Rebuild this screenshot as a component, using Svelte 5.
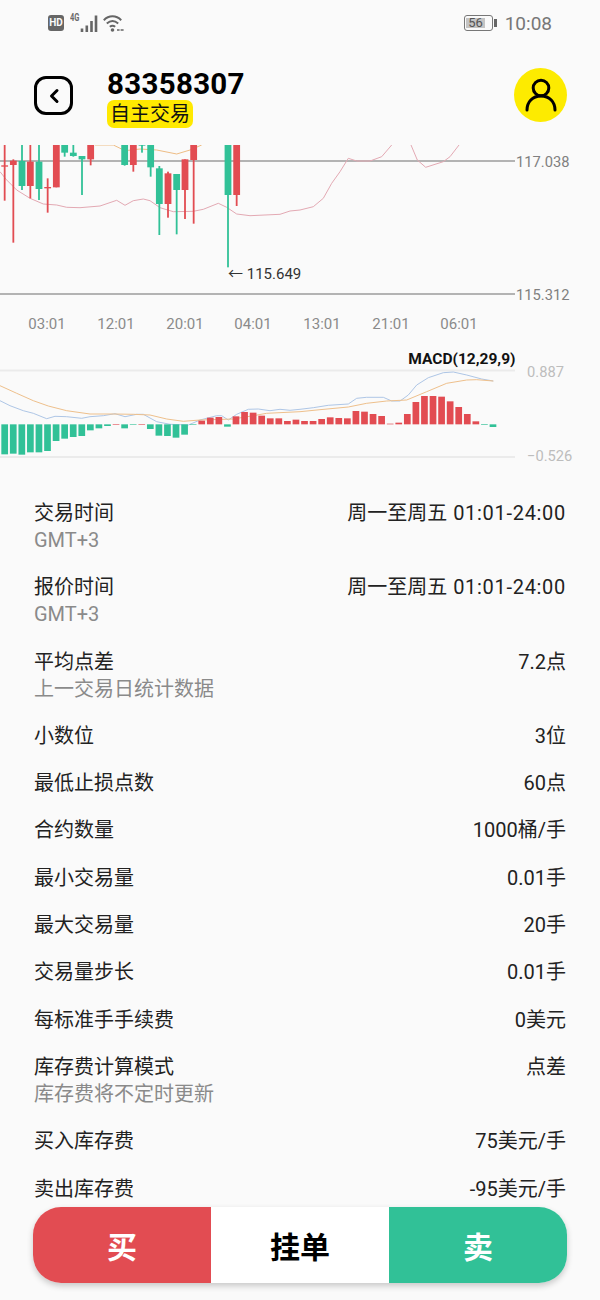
<script lang="ts">
  const RED = '#e24c52';
  const GREEN = '#31c197';

  // k-line, sampled at 3x: [center, wick top, wick bottom, body top, body bottom, up]
  const candles: [number, number, number, number, number, boolean][] = [
    [14, 45, 212, 106, 110, true],
    [40, 88, 338, 92, 105, true],
    [66, 45, 180, 93, 168, false],
    [91, 45, 205, 95, 168, true],
    [117, 45, 210, 95, 177, false],
    [143, 145, 248, 171, 175, true],
    [169, 45, 172, 45, 172, true],
    [194, 45, 80, 45, 68, false],
    [220, 45, 80, 68, 78, false],
    [246, 78, 195, 78, 88, false],
    [272, 45, 106, 45, 88, true],
    [374, 45, 107, 45, 105, false],
    [400, 45, 125, 45, 105, true],
    [426, 45, 68, 45, 47, false],
    [452, 45, 140, 45, 112, false],
    [478, 108, 315, 115, 222, false],
    [504, 125, 263, 130, 222, true],
    [530, 132, 313, 132, 180, false],
    [555, 88, 267, 88, 180, true],
    [581, 45, 281, 45, 90, true],
    [684, 45, 412, 45, 195, false],
    [710, 45, 228, 45, 195, true]
  ];

  const maLines = [
    [[0, 125], [20, 150], [50, 180], [90, 205], [130, 222], [170, 225], [200, 232], [240, 233], [300, 228], [350, 211], [375, 226], [400, 212], [430, 207], [450, 212], [480, 233], [520, 245], [580, 244], [610, 238], [655, 220], [680, 232], [710, 252], [750, 257], [840, 253], [870, 243], [900, 240], [940, 230], [970, 205], [995, 160], [1020, 125], [1045, 85], [1070, 93], [1110, 93], [1145, 80], [1175, 45]],
    [[1233, 45], [1252, 90], [1277, 112], [1330, 95], [1350, 80], [1377, 45]]
  ];
  const orangeLine = [[285, 45], [340, 45], [375, 62], [420, 57], [470, 60], [530, 72], [570, 60], [605, 45]];

  const times = [
    [47, '03:01'], [116, '12:01'], [185, '20:01'], [253, '04:01'],
    [322, '13:01'], [391, '21:01'], [459, '06:01']
  ];

  // macd histogram: edge of each bar at 3x, the zero line is 238
  const macd = [
    328, 326, 329, 322, 322, 318, 288, 281, 276, 273, 256, 250, 243, 238, 250, 239, 238, 252, 272, 273, 278, 269, 239,
    227, 218, 216, 245, 214, 201, 203, 212, 220, 220, 228, 224, 228, 228, 222, 217, 219, 220, 198, 200, 207, 213,
    236, 233, 207, 171, 153, 153, 155, 169, 186, 207, 229, 240, 246
  ];
  const macdBlue = [[0, 167], [30, 182], [70, 197], [100, 205], [140, 221], [165, 214], [200, 215], [245, 220], [270, 215], [310, 212], [345, 206], [375, 215], [410, 208], [430, 208], [470, 230], [510, 238], [565, 240], [600, 225], [650, 212], [665, 212], [685, 225], [710, 208], [745, 193], [775, 192], [810, 197], [840, 193], [870, 196], [900, 193], [940, 188], [985, 181], [1045, 177], [1070, 160], [1100, 157], [1150, 157], [1175, 168], [1200, 168], [1225, 150], [1250, 120], [1285, 98], [1330, 83], [1360, 81], [1400, 90], [1445, 102], [1480, 108]];
  const macdOrange = [[0, 122], [50, 145], [100, 167], [145, 183], [200, 197], [270, 207], [340, 207], [400, 208], [450, 210], [500, 222], [550, 229], [600, 225], [700, 222], [760, 212], [800, 205], [900, 200], [960, 194], [1045, 186], [1100, 175], [1160, 168], [1220, 165], [1280, 140], [1340, 115], [1400, 105], [1430, 104], [1480, 108]];

  const klineY = (y: number) => 130 + y / 3;
  const macdY = (y: number) => 345 + y / 3;
  const poly = (points: number[][], toY: (y: number) => number) =>
    points.map(([x, y]) => `${(x / 3).toFixed(1)},${toY(y).toFixed(1)}`).join(' ');

  const rows = [
    { label: '交易时间', value: '周一至周五', range: '01:01-24:00', note: 'GMT+3' },
    { label: '报价时间', value: '周一至周五', range: '01:01-24:00', note: 'GMT+3' },
    { label: '平均点差', value: '7.2点', note: '上一交易日统计数据' },
    { label: '小数位', value: '3位' },
    { label: '最低止损点数', value: '60点' },
    { label: '合约数量', value: '1000桶/手' },
    { label: '最小交易量', value: '0.01手' },
    { label: '最大交易量', value: '20手' },
    { label: '交易量步长', value: '0.01手' },
    { label: '每标准手手续费', value: '0美元' },
    { label: '库存费计算模式', value: '点差', note: '库存费将不定时更新' },
    { label: '买入库存费', value: '75美元/手' },
    { label: '卖出库存费', value: '-95美元/手' }
  ];
</script>

<div class="page">
  <div class="status">
    <div class="status-left">
      <span class="hd">HD</span>
      <span class="net">4G</span>
      <svg class="signal" width="18" height="17" viewBox="0 0 18 17">
        <path d="M2 13.500V17M6.800 10.500V17M11.500 6V17M16 0.500V17" stroke="#666" stroke-width="2.600" fill="none" />
      </svg>
      <svg class="wifi" width="21" height="17" viewBox="0 0 21 17" fill="none" stroke="#666" stroke-width="2">
        <path d="M0.800 5.200C5.800 0 13.200 0 18.200 5.200" />
        <path d="M3.800 8.600C7.300 5.500 11.700 5.500 15.200 8.600" />
        <path d="M6.800 11.800C8.500 10.500 10.500 10.500 12.200 11.800" />
        <circle cx="9.500" cy="15" r="1.800" fill="#666" stroke="none" />
        <path d="M14 15h2.600M17.600 15h3" stroke-width="1.500" />
      </svg>
    </div>
    <div class="status-right">
      <div class="battery"><span class="level">56</span></div>
      <span class="cap"></span>
      <span class="clock">10:08</span>
    </div>
  </div>

  <header class="header">
    <button class="back" aria-label="返回">
      <svg width="14" height="18" viewBox="0 0 14 18" fill="none" stroke="#000" stroke-width="3" stroke-linecap="round" stroke-linejoin="round">
        <path d="M10 3.500 4.500 9l5.500 5.500" />
      </svg>
    </button>
    <div class="title">
      <div class="account">83358307</div>
      <span class="tag">自主交易</span>
    </div>
    <div class="avatar">
      <svg width="32" height="36" viewBox="0 0 32 36" fill="none" stroke="#000" stroke-width="3" stroke-linecap="round">
        <circle cx="16" cy="11" r="7.800" />
        <path d="M2 33c0-8 5.500-14 14-14s14 6 14 14" />
      </svg>
    </div>
  </header>

  <svg class="chart" width="600" height="335" viewBox="0 145 600 335">
    <line x1="0" x2="515" y1="161" y2="161" class="grid" />
    <line x1="0" x2="515" y1="294" y2="294" class="grid" />

    {#each maLines as line}
      <polyline points={poly(line, klineY)} fill="none" stroke="#e3a9b3" stroke-width="1" />
    {/each}
    <polyline points={poly(orangeLine, klineY)} fill="none" stroke="#eebd85" stroke-width="1" />

    {#each candles as [cx, high, low, top, bottom, up]}
      <rect x={cx / 3 - 0.9} y={klineY(high)} width="1.800" height={(low - high) / 3} fill={up ? RED : GREEN} />
      <rect x={cx / 3 - 3.400} y={klineY(top)} width="6.800" height={(bottom - top) / 3} fill={up ? RED : GREEN} />
    {/each}

    <text x="516" y="166.500" class="price">117.038</text>
    <text x="516" y="299.500" class="price">115.312</text>
    <text x="228" y="279" class="low">← 115.649</text>

    {#each times as [x, label]}
      <text {x} y="329" text-anchor="middle" class="time">{label}</text>
    {/each}

    <line x1="0" x2="515" y1="370.500" y2="370.500" class="macd-grid" />
    <line x1="0" x2="515" y1="457" y2="457" class="macd-grid" />

    <polyline points={poly(macdBlue, macdY)} fill="none" stroke="#aec6e6" stroke-width="1" />
    <polyline points={poly(macdOrange, macdY)} fill="none" stroke="#eec08c" stroke-width="1" />

    {#each macd as edge, i}
      <rect
        x={(4 + 25.7 * i) / 3}
        y={macdY(Math.min(edge, 238))}
        width="6.700"
        height={Math.max(Math.abs(edge - 238) / 3, 0.6)}
        fill={edge > 238 ? GREEN : RED}
      />
    {/each}

    <text x="515.500" y="364" text-anchor="end" class="macd-name">MACD(12,29,9)</text>
    <text x="527" y="376.500" class="macd-val">0.887</text>
    <text x="527" y="461" class="macd-val">−0.526</text>
  </svg>

  <div class="rows">
    {#each rows as row}
      <div class="row">
        <div class="line">
          <span>{row.label}</span>
          <span>{row.value}{#if row.range}<span class="range">{row.range}</span>{/if}</span>
        </div>
        {#if row.note}
          <div class="note">{row.note}</div>
        {/if}
      </div>
    {/each}
  </div>

  <div class="actions">
    <button class="buy">买</button>
    <button class="pending">挂单</button>
    <button class="sell">卖</button>
  </div>
</div>

<style>
  :global(body) {
    background: #fafafa;
  }

  .page {
    position: relative;
    width: 600px;
    height: 1300px;
    overflow: hidden;
    background: #fafafa;
    color: #111;
    font-family: Roboto, 'Noto Sans CJK SC', sans-serif;
  }

  .status {
    height: 46px;
    display: flex;
    justify-content: space-between;
    align-items: center;
    padding: 0 48px;
    color: #6b6b6b;
  }

  .status-left,
  .status-right {
    display: flex;
    align-items: center;
  }

  .hd {
    width: 16px;
    height: 16px;
    border-radius: 3px;
    background: #666;
    color: #fafafa;
    font-size: 10px;
    font-weight: 700;
    line-height: 16px;
    text-align: center;
  }

  .net {
    align-self: flex-start;
    margin: -3px 0 0 6px;
    width: 10px;
    font-size: 10px;
    line-height: 12px;
    font-weight: 700;
    transform: scaleX(0.75);
    transform-origin: left;
  }

  .signal {
    margin-left: 0;
  }

  .wifi {
    margin-left: 5px;
  }

  .battery {
    width: 29px;
    height: 16px;
    box-sizing: border-box;
    border: 1.500px solid #777;
    border-radius: 3px;
    padding: 1.500px;
  }

  .level {
    display: block;
    width: 17px;
    height: 10px;
    padding-left: 2px;
    background: #c4c4c4;
    font-size: 13px;
    line-height: 10px;
    color: #555;
  }

  .cap {
    width: 2.500px;
    height: 8px;
    margin-left: 1.500px;
    background: #666;
  }

  .clock {
    margin-left: 8px;
    font-size: 19px;
    color: #777;
  }

  .header {
    height: 99px;
    box-sizing: border-box;
    display: flex;
    align-items: flex-start;
    padding: 22px 33px 0 34px;
  }

  .back {
    width: 39px;
    height: 39px;
    margin-top: 8px;
    box-sizing: border-box;
    padding: 0;
    border: 3px solid #000;
    border-radius: 12px;
    background: transparent;
    display: flex;
    align-items: center;
    justify-content: center;
  }

  .title {
    margin-left: 34px;
    flex: 1;
  }

  .account {
    font-size: 29.500px;
    font-weight: 700;
    line-height: 32px;
    color: #000;
    letter-spacing: 0.3px;
    padding-top: 0;
  }

  .tag {
    display: inline-block;
    padding: 0 3px;
    background: #ffe900;
    border-radius: 7px;
    font-size: 20px;
    line-height: 28px;
    height: 28px;
    color: #111;
  }

  .avatar {
    width: 53px;
    height: 54px;
    border-radius: 50%;
    background: #fdeb00;
    display: flex;
    align-items: center;
    justify-content: center;
  }

  .chart {
    display: block;
  }

  .grid {
    stroke: #b3b3b3;
    stroke-width: 2;
  }

  .macd-grid {
    stroke: #ebebeb;
    stroke-width: 2;
  }

  .price {
    font-size: 14.700px;
    fill: #808080;
  }

  .low {
    font-size: 15px;
    fill: #333;
  }

  .time {
    font-size: 15px;
    fill: #8a8a8a;
  }

  .macd-name {
    font-size: 15.500px;
    font-weight: 700;
    fill: #111;
  }

  .macd-val {
    font-size: 14.700px;
    fill: #bdbdbd;
  }

  .rows {
    padding: 20px 34px 0;
    display: flex;
    flex-direction: column;
    gap: 20.300px;
  }

  .line {
    display: flex;
    justify-content: space-between;
    font-size: 20px;
    line-height: 27px;
    color: #222;
  }

  .range {
    margin-left: 6px;
    letter-spacing: 0.7px;
  }

  .note {
    font-size: 20px;
    line-height: 27px;
    color: #8a8a8a;
  }

  .actions {
    position: absolute;
    left: 33px;
    top: 1207px;
    width: 534px;
    height: 76px;
    display: grid;
    grid-template-columns: 178px 178px 178px;
    border-radius: 28px;
    overflow: hidden;
    box-shadow: 0 3px 6px rgba(0, 0, 0, 0.2);
  }

  .actions button {
    border: none;
    padding: 0;
    font-family: inherit;
    font-size: 30px;
    font-weight: 700;
  }

  .buy {
    background: #e24c52;
    color: #fff;
  }

  .pending {
    background: #fff;
    color: #000;
  }

  .sell {
    background: #31c197;
    color: #fff;
  }
</style>
